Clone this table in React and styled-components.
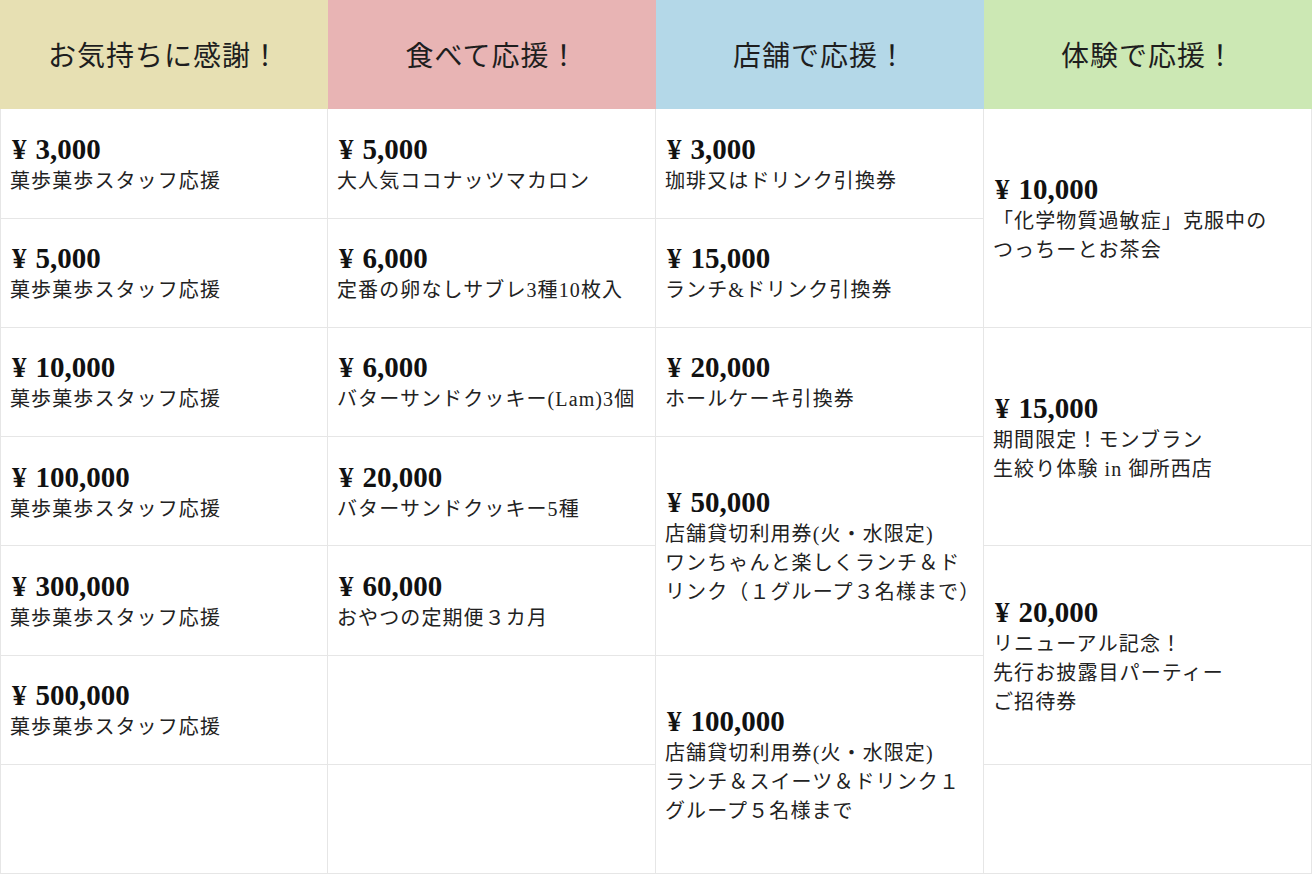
import React from 'react'
import styled, { createGlobalStyle } from 'styled-components'

const GlobalStyle = createGlobalStyle`
	* { box-sizing: border-box; }
	html, body { margin: 0; padding: 0; background: #fff; }
	body {
		font-family: 'Liberation Serif', 'Noto Sans CJK JP', serif;
		color: #222;
	}
`

const Table = styled.div`
	width: 1312px;
	height: 874px;
	display: grid;
	grid-template-columns: repeat(4, minmax(0, 1fr));
	grid-template-rows: repeat(8, minmax(0, 1fr));
	grid-auto-flow: column;
`

const Head = styled.div`
	display: flex;
	align-items: center;
	justify-content: center;
	background: ${p => p.$bg};
	font-size: 28px;
	letter-spacing: 1px;
	color: #1e1e1e;
	padding-bottom: 1px;
`

const Cell = styled.div`
	grid-row: span ${p => p.$span || 1};
	display: flex;
	flex-direction: column;
	justify-content: center;
	padding: 0 4px 0 9px;
	border-right: 1px solid #e6e6e6;
	border-bottom: 1px solid #e6e6e6;
	${p => p.$first && 'border-left: 1px solid #e6e6e6;'}
`

const Price = styled.div`
	font-size: 29px;
	font-weight: bold;
	line-height: 36px;
	color: #111;
	padding-left: 2px;
`

const Yen = styled.span`
	margin-right: 9px;
`

const Desc = styled.div`
	font-size: 20px;
	line-height: 29px;
	letter-spacing: 1.1px;
	color: #222;
	white-space: nowrap;
`

const columns = [
	{
		title: 'お気持ちに感謝！',
		bg: '#e7e0b3',
		items: [
			{ price: '3,000', lines: ['菓歩菓歩スタッフ応援'] },
			{ price: '5,000', lines: ['菓歩菓歩スタッフ応援'] },
			{ price: '10,000', lines: ['菓歩菓歩スタッフ応援'] },
			{ price: '100,000', lines: ['菓歩菓歩スタッフ応援'] },
			{ price: '300,000', lines: ['菓歩菓歩スタッフ応援'] },
			{ price: '500,000', lines: ['菓歩菓歩スタッフ応援'] },
			{}
		]
	},
	{
		title: '食べて応援！',
		bg: '#e8b4b4',
		items: [
			{ price: '5,000', lines: ['大人気ココナッツマカロン'] },
			{ price: '6,000', lines: ['定番の卵なしサブレ3種10枚入'] },
			{ price: '6,000', lines: ['バターサンドクッキー(Lam)3個'] },
			{ price: '20,000', lines: ['バターサンドクッキー5種'] },
			{ price: '60,000', lines: ['おやつの定期便３カ月'] },
			{},
			{}
		]
	},
	{
		title: '店舗で応援！',
		bg: '#b4d8e8',
		items: [
			{ price: '3,000', lines: ['珈琲又はドリンク引換券'] },
			{ price: '15,000', lines: ['ランチ&ドリンク引換券'] },
			{ price: '20,000', lines: ['ホールケーキ引換券'] },
			{
				price: '50,000',
				span: 2,
				lines: [
					'店舗貸切利用券(火・水限定)',
					'ワンちゃんと楽しくランチ＆ド',
					'リンク（１グループ３名様まで）'
				]
			},
			{
				price: '100,000',
				span: 2,
				lines: [
					'店舗貸切利用券(火・水限定)',
					'ランチ＆スイーツ＆ドリンク１',
					'グループ５名様まで'
				]
			}
		]
	},
	{
		title: '体験で応援！',
		bg: '#cce8b4',
		items: [
			{
				price: '10,000',
				span: 2,
				lines: ['「化学物質過敏症」克服中の', 'つっちーとお茶会']
			},
			{
				price: '15,000',
				span: 2,
				lines: ['期間限定！モンブラン', '生絞り体験 in 御所西店']
			},
			{
				price: '20,000',
				span: 2,
				lines: ['リニューアル記念！', '先行お披露目パーティー', 'ご招待券']
			},
			{}
		]
	}
]

const App = () => (
	<>
		<GlobalStyle />
		<Table>
			{columns.map((col, c) => [
				<Head key={`head-${c}`} $bg={col.bg}>
					{col.title}
				</Head>,
				...col.items.map((item, i) => (
					<Cell key={`cell-${c}-${i}`} $span={item.span} $first={c === 0}>
						{item.price && (
							<Price>
								<Yen>¥</Yen>
								{item.price}
							</Price>
						)}
						{item.lines &&
							item.lines.map((line, j) => <Desc key={j}>{line}</Desc>)}
					</Cell>
				))
			])}
		</Table>
	</>
)

export default App
